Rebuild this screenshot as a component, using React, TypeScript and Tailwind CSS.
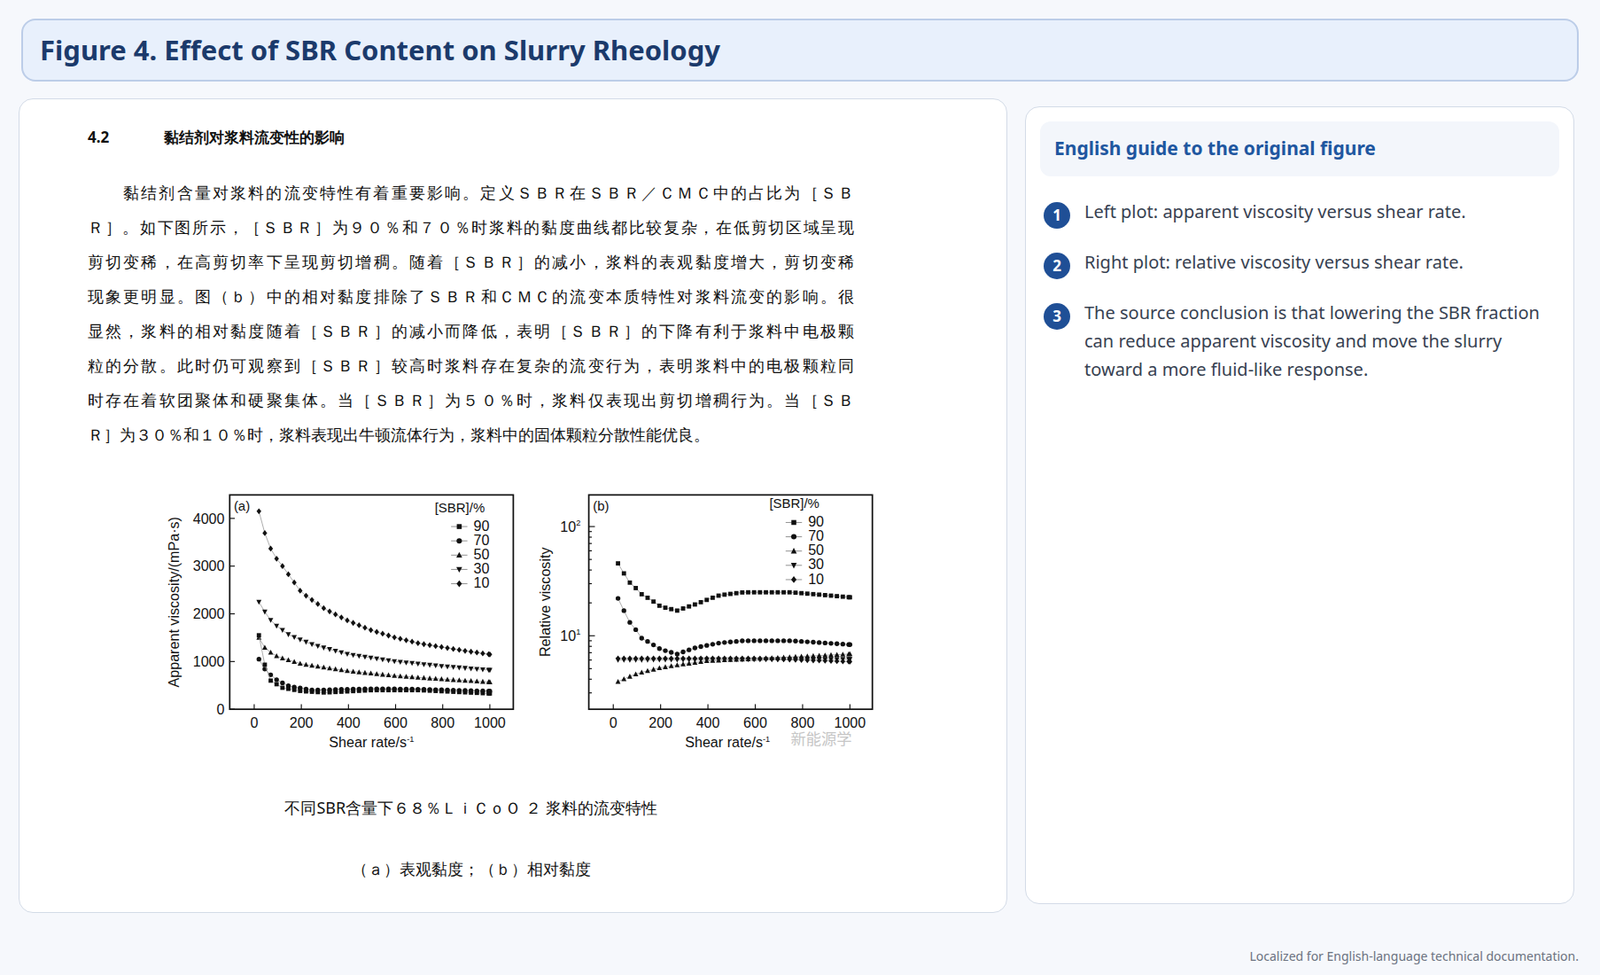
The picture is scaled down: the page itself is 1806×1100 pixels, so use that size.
import React from 'react';

type Pt = [number, number];

const lines = [
  '黏结剂含量对浆料的流变特性有着重要影响。定义ＳＢＲ在ＳＢＲ／ＣＭＣ中的占比为［ＳＢ',
  'Ｒ］。如下图所示，［ＳＢＲ］为９０％和７０％时浆料的黏度曲线都比较复杂，在低剪切区域呈现',
  '剪切变稀，在高剪切率下呈现剪切增稠。随着［ＳＢＲ］的减小，浆料的表观黏度增大，剪切变稀',
  '现象更明显。图（ｂ）中的相对黏度排除了ＳＢＲ和ＣＭＣ的流变本质特性对浆料流变的影响。很',
  '显然，浆料的相对黏度随着［ＳＢＲ］的减小而降低，表明［ＳＢＲ］的下降有利于浆料中电极颗',
  '粒的分散。此时仍可观察到［ＳＢＲ］较高时浆料存在复杂的流变行为，表明浆料中的电极颗粒同',
  '时存在着软团聚体和硬聚集体。当［ＳＢＲ］为５０％时，浆料仅表现出剪切增稠行为。当［ＳＢ',
  'Ｒ］为３０％和１０％时，浆料表现出牛顿流体行为，浆料中的固体颗粒分散性能优良。',
];

const guide = [
  'Left plot: apparent viscosity versus shear rate.',
  'Right plot: relative viscosity versus shear rate.',
  'The source conclusion is that lowering the SBR fraction can reduce apparent viscosity and move the slurry toward a more fluid-like response.',
];

// piecewise linear lookup
const interp = (tab: Pt[], x: number) => {
  for (let i = 0; i < tab.length - 1; i++) {
    const [x0, y0] = tab[i];
    const [x1, y1] = tab[i + 1];
    if (x >= x0 && x <= x1) return y0 + ((y1 - y0) * (x - x0)) / (x1 - x0);
  }
  return tab[tab.length - 1][1];
};

const xs: number[] = [];
for (let x = 20; x <= 1000; x += 25) xs.push(x);
xs.push(1000);

const leftSeries: { m: string; tab: Pt[] }[] = [
  { m: 'diamond', tab: [[20, 4150], [50, 3600], [80, 3250], [120, 3000], [200, 2450], [300, 2100], [400, 1850], [500, 1650], [600, 1500], [700, 1380], [800, 1300], [900, 1220], [1000, 1150]] },
  { m: 'down', tab: [[20, 2250], [50, 2000], [80, 1800], [150, 1550], [250, 1350], [400, 1150], [600, 1000], [800, 900], [1000, 820]] },
  { m: 'up', tab: [[20, 1500], [50, 1250], [100, 1100], [200, 950], [400, 800], [600, 700], [800, 630], [1000, 570]] },
  { m: 'circle', tab: [[20, 1050], [50, 800], [100, 600], [150, 480], [250, 400], [400, 420], [500, 430], [700, 420], [1000, 380]] },
  { m: 'square', tab: [[20, 1550], [40, 1000], [70, 600], [120, 450], [200, 380], [300, 350], [500, 400], [700, 400], [1000, 330]] },
];

const rightSeries: { m: string; tab: Pt[] }[] = [
  { m: 'square', tab: [[20, 46], [60, 32], [120, 24], [200, 18.5], [270, 17], [350, 19.5], [450, 23.5], [550, 25], [750, 25], [900, 23.5], [1000, 22.5]] },
  { m: 'circle', tab: [[20, 22], [60, 14], [120, 9.5], [200, 7.5], [270, 6.8], [350, 7.8], [450, 8.6], [550, 9], [750, 9], [1000, 8.3]] },
  { m: 'up', tab: [[20, 3.8], [100, 4.5], [200, 5.1], [400, 5.9], [700, 6.3], [1000, 6.8]] },
  { m: 'down', tab: [[20, 6], [1000, 6.1]] },
  { m: 'diamond', tab: [[20, 6.2], [600, 6.2], [1000, 5.8]] },
];

const Marker = ({ m, x, y, s = 2.4 }: { m: string; x: number; y: number; s?: number }) => {
  if (m === 'square') return <rect x={x - s} y={y - s} width={s * 2} height={s * 2} fill="#111" />;
  if (m === 'circle') return <circle cx={x} cy={y} r={s * 1.1} fill="#111" />;
  if (m === 'up') return <polygon points={`${x},${y - s * 1.3} ${x - s * 1.2},${y + s} ${x + s * 1.2},${y + s}`} fill="#111" />;
  if (m === 'down') return <polygon points={`${x},${y + s * 1.3} ${x - s * 1.2},${y - s} ${x + s * 1.2},${y - s}`} fill="#111" />;
  return <polygon points={`${x},${y - s * 1.4} ${x + s * 1.1},${y} ${x},${y + s * 1.4} ${x - s * 1.1},${y}`} fill="#111" />;
};

const Legend = ({ x, y }: { x: number; y: number }) => (
  <g fontFamily="'Liberation Sans', Arial, sans-serif" fontSize="13" fill="#111">
    <text x={x - 12} y={y}>[SBR]/%</text>
    {['square', 'circle', 'up', 'down', 'diamond'].map((m, i) => (
      <g key={m}>
        <line x1={x + 4} x2={x + 20} y1={y + 14 + i * 14} y2={y + 14 + i * 14} stroke="#888" strokeWidth="0.8" />
        <Marker m={m} x={x + 12} y={y + 14 + i * 14} />
        <text x={x + 26} y={y + 18 + i * 14} fontSize="14">{['90', '70', '50', '30', '10'][i]}</text>
      </g>
    ))}
  </g>
);

const Chart = () => {
  const lx = (v: number) => 92 + v * 0.231;
  const ly = (v: number) => 217 - v * 0.04675;
  const rx = (v: number) => 444 + v * 0.232;
  const ry = (v: number) => 145 - 107 * Math.log10(v / 10);
  const font = "'Liberation Sans', Arial, sans-serif";
  return (
    <svg viewBox="0 0 700 260" width="806" height="300">
      {/* left plot */}
      <rect x="68" y="7" width="278" height="210" fill="white" stroke="#111" strokeWidth="1.5" />
      {[0, 200, 400, 600, 800, 1000].map((v) => (
        <g key={v}>
          <line x1={lx(v)} x2={lx(v)} y1={217} y2={212} stroke="#111" />
          <text x={lx(v)} y={235} fontSize="14" textAnchor="middle" fontFamily={font} fill="#111">{v}</text>
        </g>
      ))}
      {[0, 1000, 2000, 3000, 4000].map((v) => (
        <g key={v}>
          <line x1={68} x2={73} y1={ly(v)} y2={ly(v)} stroke="#111" />
          <text x={63} y={ly(v) + 5} fontSize="14" textAnchor="end" fontFamily={font} fill="#111">{v}</text>
        </g>
      ))}
      <text x="72" y="22" fontSize="13" fontFamily={font} fill="#111">(a)</text>
      <text x="207" y="254" fontSize="14" textAnchor="middle" fontFamily={font} fill="#111">
        Shear rate/s<tspan dy="-5" fontSize="8">-1</tspan>
      </text>
      <text transform="translate(18 112) rotate(-90)" fontSize="14" textAnchor="middle" fontFamily={font} fill="#111">Apparent viscosity/(mPa·s)</text>
      {leftSeries.map((s) => (
        <g key={'l' + s.m}>
          <polyline points={xs.map((x) => `${lx(x)},${ly(interp(s.tab, x))}`).join(' ')} fill="none" stroke="#999" strokeWidth="0.7" />
          {xs.map((x) => <Marker key={x} m={s.m} x={lx(x)} y={ly(interp(s.tab, x))} s={2.1} />)}
        </g>
      ))}
      <Legend x={281} y={24} />

      {/* right plot */}
      <rect x="420" y="7" width="278" height="210" fill="white" stroke="#111" strokeWidth="1.5" />
      {[0, 200, 400, 600, 800, 1000].map((v) => (
        <g key={v}>
          <line x1={rx(v)} x2={rx(v)} y1={217} y2={212} stroke="#111" />
          <text x={rx(v)} y={235} fontSize="14" textAnchor="middle" fontFamily={font} fill="#111">{v}</text>
        </g>
      ))}
      {[3, 4, 5, 6, 7, 8, 9, 20, 30, 40, 50, 60, 70, 80, 90].map((v) =>
        ry(v) < 217 && ry(v) > 7 ? <line key={v} x1={420} x2={423} y1={ry(v)} y2={ry(v)} stroke="#111" /> : null,
      )}
      {[10, 100].map((v) => (
        <g key={v}>
          <line x1={420} x2={426} y1={ry(v)} y2={ry(v)} stroke="#111" />
          <text x={412} y={ry(v) + 5} fontSize="14" textAnchor="end" fontFamily={font} fill="#111">
            10<tspan dy="-6" fontSize="8">{v === 10 ? '1' : '2'}</tspan>
          </text>
        </g>
      ))}
      <text x="424" y="22" fontSize="13" fontFamily={font} fill="#111">(b)</text>
      <text x="556" y="254" fontSize="14" textAnchor="middle" fontFamily={font} fill="#111">
        Shear rate/s<tspan dy="-5" fontSize="8">-1</tspan>
      </text>
      <text transform="translate(382 112) rotate(-90)" fontSize="14" textAnchor="middle" fontFamily={font} fill="#111">Relative viscosity</text>
      {rightSeries.map((s) => (
        <g key={'r' + s.m}>
          <polyline points={xs.map((x) => `${rx(x)},${ry(interp(s.tab, x))}`).join(' ')} fill="none" stroke="#999" strokeWidth="0.7" />
          {xs.map((x) => <Marker key={x} m={s.m} x={rx(x)} y={ry(interp(s.tab, x))} s={2.1} />)}
        </g>
      ))}
      <Legend x={609} y={20} />
      <text x="618" y="252" fontSize="15" fontFamily="'Noto Sans CJK SC', sans-serif" fill="#b8b8b8" opacity="0.8">新能源学</text>
    </svg>
  );
};

export default function App() {
  return (
    <div className="min-h-[1100px] w-[1806px] bg-[#f6f8fc] px-[24px] pt-[21px] [font-family:'DejaVu_Sans',sans-serif]">
      <div className="flex h-[71px] items-center rounded-[16px] border-2 border-[#bccde8] bg-[#e8f0fc] px-[19px]">
        <h1 className="text-[31px] font-bold text-[#1b3a6b]">Figure 4. Effect of SBR Content on Slurry Rheology</h1>
      </div>
      <div className="mt-[19px] flex items-start gap-[20px] -ml-[3px]">
        <div className="h-[919px] w-[1116px] rounded-[16px] border border-[#d3dbe7] bg-white pl-[77px] pr-[172px] pt-[30px] [font-family:'Noto_Sans_CJK_SC',sans-serif] text-[#111]">
          <div className="flex text-[17px] font-bold">
            <span className="w-[86px]">4.2</span>
            <span>黏结剂对浆料流变性的影响</span>
          </div>
          <div className="mt-[30px] text-[18px] leading-[39px]">
            {lines.map((l, i) => (
              <div key={i} className={`${i === 0 ? 'pl-[40px]' : ''} ${i < lines.length - 1 ? 'text-justify [text-align-last:justify]' : ''}`}>{l}</div>
            ))}
          </div>
          <div className="mt-[40px] flex justify-center ml-[64px] -mr-[40px]">
            <Chart />
          </div>
          <p className="mt-[48px] text-center text-[18px]">不同SBR含量下６８％ＬｉＣｏＯ ２ 浆料的流变特性</p>
          <p className="mt-[42px] text-center text-[18px]">（ａ）表观黏度；（ｂ）相对黏度</p>
        </div>
        <div className="mt-[9px] h-[900px] w-[620px] rounded-[16px] border border-[#d3dbe7] bg-white px-[16px] pt-[16px]">
          <div className="flex h-[62px] items-center rounded-[12px] bg-[#f3f6fb] px-[16px]">
            <h2 className="text-[21px] font-bold text-[#1f57a0]">English guide to the original figure</h2>
          </div>
          <div className="mt-[24px] flex flex-col gap-[22px] pl-[4px] pr-[10px]">
            {guide.map((g, i) => (
              <div key={i} className="flex gap-[16px]">
                <span className="mt-[5px] flex h-[30px] w-[30px] shrink-0 items-center justify-center rounded-full bg-[#1f4f96] text-[17px] font-bold text-white">{i + 1}</span>
                <p className="text-[20px] leading-[32px] text-[#374151]">{g}</p>
              </div>
            ))}
          </div>
        </div>
      </div>
      <div className="mt-[38px] text-right text-[14px] text-[#6b7280]">Localized for English-language technical documentation.</div>
    </div>
  );
}
